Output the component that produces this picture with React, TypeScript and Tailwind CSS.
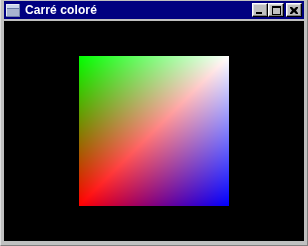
import React from 'react';

const bevel =
  'border border-t-white border-l-white border-r-black border-b-black shadow-[inset_-1px_-1px_#808080,inset_1px_1px_#dfdfdf]';

function TitleButton({ children, className = '' }: { children: React.ReactNode; className?: string }) {
  return (
    <div className={`w-[16px] h-[14px] bg-[#c0c0c0] flex items-center justify-center ${bevel} ${className}`}>
      {children}
    </div>
  );
}

function WindowIcon() {
  return (
    <svg width="14" height="13" viewBox="0 0 14 13" className="block">
      <rect x="0" y="0" width="14" height="13" fill="#e8ecf4" />
      <rect x="1" y="1" width="12" height="3" fill="#c8d4ec" />
      <rect x="1" y="4" width="12" height="1" fill="#6878a8" />
      <rect x="1" y="5" width="12" height="7" fill="#a8b4d0" />
      <rect x="13" y="0" width="1" height="13" fill="#7080a8" />
      <rect x="0" y="12" width="14" height="1" fill="#7080a8" />
    </svg>
  );
}

function ColorSquare() {
  // two triangles split along the bottom-left / top-right diagonal:
  // G = 1 - y, B = x, R peaks on the diagonal
  return (
    <svg width="150" height="150" viewBox="0 0 150 150" className="block">
      <defs>
        <linearGradient id="sq-g" x1="0" y1="0" x2="0" y2="1">
          <stop offset="0" stopColor="#00ff00" />
          <stop offset="1" stopColor="#000000" />
        </linearGradient>
        <linearGradient id="sq-r" x1="0" y1="0" x2="1" y2="1">
          <stop offset="0" stopColor="#000000" />
          <stop offset="0.5" stopColor="#ff0000" />
          <stop offset="1" stopColor="#000000" />
        </linearGradient>
        <linearGradient id="sq-b" x1="0" y1="0" x2="1" y2="0">
          <stop offset="0" stopColor="#000000" />
          <stop offset="1" stopColor="#0000ff" />
        </linearGradient>
      </defs>
      <rect width="150" height="150" fill="url(#sq-g)" />
      <rect width="150" height="150" fill="url(#sq-r)" className="mix-blend-screen" />
      <rect width="150" height="150" fill="url(#sq-b)" className="mix-blend-screen" />
    </svg>
  );
}

export default function App() {
  return (
    <div className="w-[308px] h-[246px] bg-[#c0c0c0] flex flex-col pt-[1px] pl-[3px] pr-[3px] pb-[4px] border-l border-l-[#dfdfdf] border-r border-r-[#808080] border-b border-b-[#808080] overflow-hidden">
      {/* Title bar */}
      <div className="h-[18px] bg-[#000080] flex items-center pl-[2px] pr-[2px] shrink-0">
        <WindowIcon />
        <span className="ml-[5px] text-white font-bold text-[12px] leading-none font-['Liberation_Sans',Arial,sans-serif] tracking-[0.1px]">
          Carré coloré
        </span>
        <div className="ml-auto flex items-center">
          <TitleButton>
            <svg width="6" height="2" className="block mt-[6px] -ml-[2px]">
              <rect width="6" height="2" fill="#000" />
            </svg>
          </TitleButton>
          <TitleButton>
            <svg width="9" height="9" className="block">
              <rect x="0" y="0" width="9" height="2" fill="#000" />
              <rect x="0" y="0" width="1" height="9" fill="#000" />
              <rect x="8" y="0" width="1" height="9" fill="#000" />
              <rect x="0" y="8" width="9" height="1" fill="#000" />
            </svg>
          </TitleButton>
          <TitleButton className="ml-[2px]">
            <svg width="8" height="7" className="block">
              <path d="M0 0h2l2 2 2-2h2v1l-2 2.5 2 2.5v1h-2l-2-2-2 2h-2v-1l2-2.5-2-2.5z" fill="#000" />
            </svg>
          </TitleButton>
        </div>
      </div>

      {/* Client area */}
      <div className="mt-[2px] flex-1 bg-black flex items-center justify-center">
        <ColorSquare />
      </div>
    </div>
  );
}
